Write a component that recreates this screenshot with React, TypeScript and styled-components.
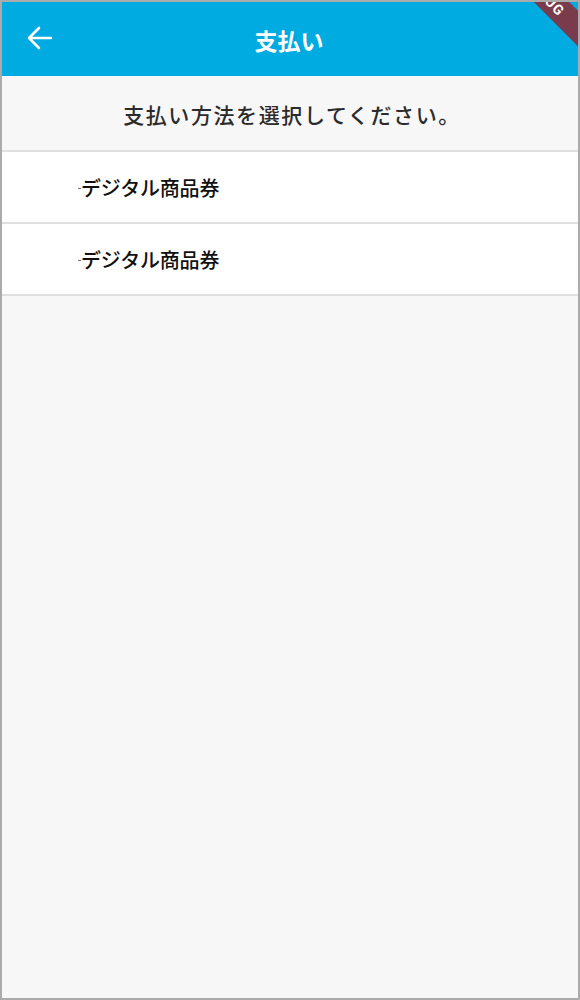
import styled, { createGlobalStyle } from 'styled-components';

const GlobalStyle = createGlobalStyle`
  html, body {
    margin: 0;
    padding: 0;
    background: #ffffff;
  }
  * {
    box-sizing: border-box;
  }
`;

const Frame = styled.div`
  position: relative;
  width: 580px;
  height: 1000px;
  border: 2px solid #ababab;
  background: #f7f7f7;
  overflow: hidden;
  display: flex;
  flex-direction: column;
  font-family: 'Noto Sans CJK JP', 'Noto Sans', sans-serif;
`;

const AppBar = styled.header`
  height: 74px;
  flex-shrink: 0;
  background: #00abe2;
  display: grid;
  grid-template-columns: 76px 1fr 76px;
  align-items: center;
`;

const BackButton = styled.button`
  width: 76px;
  height: 74px;
  border: none;
  background: transparent;
  padding: 0 0 2px 0;
  display: flex;
  align-items: center;
  justify-content: center;
  cursor: pointer;
`;

const Title = styled.h1`
  margin: 0;
  text-align: center;
  color: #ffffff;
  font-size: 23px;
  font-weight: 700;
  line-height: 1;
  padding-top: 3px;
  padding-right: 2px;
`;

const Prompt = styled.div`
  height: 76px;
  flex-shrink: 0;
  display: flex;
  align-items: center;
  justify-content: center;
  font-size: 21px;
  font-weight: 500;
  letter-spacing: 1.6px;
  color: #2b2b2b;
  padding-left: 4px;
  padding-top: 2px;
  border-bottom: 2px solid #e0e0e0;
`;

const List = styled.ul`
  margin: 0;
  padding: 0;
  list-style: none;
`;

const Item = styled.li`
  height: 72px;
  display: flex;
  align-items: center;
  padding-left: 76px;
  background: #ffffff;
  border-bottom: 2px solid #e0e0e0;
  font-size: 20px;
  font-weight: 500;
  letter-spacing: -0.2px;
  color: #111111;
  cursor: pointer;
`;

const Mark = styled.span`
  display: inline-block;
  width: 3px;
  height: 1px;
  background: #6f6f6f;
  margin-top: 2px;
`;

const Ribbon = styled.div`
  position: absolute;
  left: 443px;
  top: -19px;
  width: 200px;
  height: 25px;
  background: #7a3b4c;
  color: #ffffff;
  transform: rotate(45deg);
  display: flex;
  align-items: center;
  justify-content: center;
  font-family: 'Roboto', 'Liberation Sans', sans-serif;
  font-size: 14px;
  font-weight: 700;
  letter-spacing: 1px;
`;

const methods = ['デジタル商品券', 'デジタル商品券'];

const App = () => {
  return (
    <>
      <GlobalStyle />
      <Frame>
        <AppBar>
          <BackButton aria-label="戻る">
            <svg width="26" height="24" viewBox="0 0 26 24" fill="none">
              <path
                d="M24 12H2.5M12 2L2 12l10 10"
                stroke="#ffffff"
                strokeWidth="2.6"
                strokeLinecap="round"
                strokeLinejoin="round"
              />
            </svg>
          </BackButton>
          <Title>支払い</Title>
          <div />
        </AppBar>
        <Prompt>支払い方法を選択してください。</Prompt>
        <List>
          {methods.map((m, i) => (
            <Item key={i}>
              <Mark />
              {m}
            </Item>
          ))}
        </List>
        <Ribbon>DEBUG</Ribbon>
      </Frame>
    </>
  );
};

export default App;
